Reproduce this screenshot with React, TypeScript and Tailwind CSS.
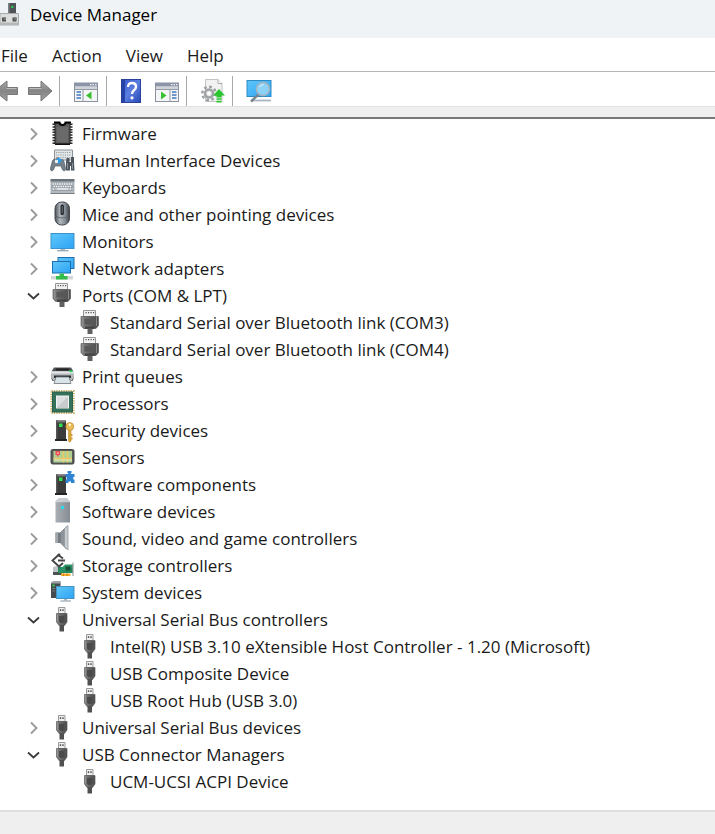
import { useState } from "react";
import type { ReactNode } from "react";

type DeviceNode = {
  label: string;
  icon: () => ReactNode;
  children?: string[];
  open?: boolean;
};

const Svg = ({ children }: { children: ReactNode }) => (
  <svg viewBox="0 0 24 24" className="size-6 shrink-0 overflow-visible" aria-hidden="true">
    {children}
  </svg>
);

// Shared gradients, referenced by id from the icons below
const Gradients = () => (
  <svg className="absolute size-0" aria-hidden="true">
    <defs>
      <linearGradient id="screen" x1="0" y1="0" x2="1" y2="1">
        <stop offset="0" stopColor="#5fc6f9" />
        <stop offset="1" stopColor="#2da3f5" />
      </linearGradient>
      <linearGradient id="metal" x1="0" y1="0" x2="1" y2="0">
        <stop offset="0" stopColor="#a9afb5" />
        <stop offset="1" stopColor="#858c93" />
      </linearGradient>
      <linearGradient id="plug" x1="0" y1="0" x2="1" y2="0">
        <stop offset="0" stopColor="#858585" />
        <stop offset="0.5" stopColor="#626262" />
        <stop offset="1" stopColor="#4c4c4c" />
      </linearGradient>
      <linearGradient id="arrow" x1="0" y1="0" x2="0" y2="1">
        <stop offset="0" stopColor="#a8a8a8" />
        <stop offset="0.5" stopColor="#858585" />
        <stop offset="1" stopColor="#a0a0a0" />
      </linearGradient>
      <linearGradient id="mouse" x1="0" y1="0" x2="1" y2="0">
        <stop offset="0" stopColor="#4b5157" />
        <stop offset="0.35" stopColor="#b1b8bf" />
        <stop offset="0.7" stopColor="#838b94" />
        <stop offset="1" stopColor="#3d4247" />
      </linearGradient>
      <linearGradient id="help" x1="0" y1="0" x2="1" y2="1">
        <stop offset="0" stopColor="#3355c8" />
        <stop offset="0.5" stopColor="#5b7fe0" />
        <stop offset="1" stopColor="#2546b4" />
      </linearGradient>
    </defs>
  </svg>
);

const FirmwareIcon = () => (
  <Svg>
    <path d="M4 1.500V23M21 1.500V23" stroke="#2b2b2b" strokeWidth="3" strokeDasharray="1.500 1.200" />
    <path d="M5 1h5q0 2 2.500 2T15 1h5v21H5z" fill="#5d5d5d" stroke="#222" />
    <path d="M4 .6h5.500q0 2.400 3 2.400t3-2.400H21" fill="none" stroke="#050505" strokeWidth="2" />
    <path d="M5 22.300h15" stroke="#111" strokeWidth="1.400" />
    <path d="M7 5h11v15H7z" fill="#6a6a6a" />
  </Svg>
);

const HidIcon = () => (
  <Svg>
    <path d="M4.500 1h18v10h-18z" fill="#e3e6e8" stroke="#8b9197" />
    <path d="M6 3.500h15M6 6h15M6 8.500h15" stroke="#9aa0a5" strokeWidth="1" strokeDasharray="1.200 1" />
    <path d="M2.500 11.500Q4 9.500 5.500 11h5q2-1.500 3.200.5l1.800 7.500q.3 3-1.500 3-1.500 0-3-5H5q-1.500 5-3 5-1.800 0-1.500-3z" fill="#74808a" stroke="#56616a" strokeWidth=".7" />
    <path d="M5 9.500l3-1.500v3z" fill="#e9802d" />
    <path d="M8 8l4 3-3 4-4-3z" fill="#2d9be8" />
    <path d="M5 11h3v3H5z" fill="#e7eef3" />
    <path d="M16.500 9h3v4h1.500V8h3v5l.5 8.500h-3.500V17h-1v4.500h-4V13z" fill="#4d565e" />
    <path d="M17.500 14v6M22.500 14v6" stroke="#89929a" />
  </Svg>
);

const KeyboardIcon = () => (
  <Svg>
    <path d="M.5 3h24v3H.5z" fill="#68727b" />
    <path d="M.5 5.500h24V18H.5z" fill="#b3bac0" />
    <path d="M1.500 6.500h22v8.500h-22z" fill="#97a0a7" />
    <path d="M2.500 8h20M3.500 10.500h18M2.500 13h3M19.500 13h3" stroke="#f4f6f7" strokeWidth="1.500" strokeDasharray="1.500 .8" />
    <path d="M6.500 13h12" stroke="#f4f6f7" strokeWidth="1.500" />
    <path d="M.5 17.500h24" stroke="#777f86" />
  </Svg>
);

const MouseIcon = () => (
  <Svg>
    <rect x="5" y="-1" width="14.500" height="23" rx="6.500" fill="url(#mouse)" stroke="#42484e" />
    <path d="M5.500 13q6.500 4 13.500 0" stroke="#555c63" fill="none" strokeWidth=".8" />
    <rect x="10.500" y="1.500" width="3.400" height="10.500" rx="1.500" fill="#23282d" />
    <path d="M12.200 3v7.500" stroke="#6f7a84" strokeWidth=".9" />
  </Svg>
);

const MonitorIcon = () => (
  <Svg>
    <rect x="1" y="3.500" width="23" height="15" fill="url(#screen)" stroke="#3a93cc" />
    <path d="M10.500 19h4.500v1.500h-4.500z" fill="#a8b9c4" />
    <path d="M7 20.700h11.500" stroke="#9cadb8" strokeWidth="1.400" />
  </Svg>
);

const NetworkIcon = () => (
  <Svg>
    <path d="M1 19h22v3.500H1z" fill="#d3d5d6" />
    <rect x="8" y=".5" width="16" height="11" fill="url(#screen)" stroke="#1b6fae" />
    <rect x="2.500" y="4.500" width="18" height="11.500" fill="url(#screen)" stroke="#1b6fae" />
    <path d="M9.500 16.500h4.500v2.500h3.500v3.500H6V19h3.500z" fill="#35bd4b" />
  </Svg>
);

const PortIcon = () => (
  <Svg>
    <path d="M5.500 -.5h12v6h-12z" fill="#f1f1f1" stroke="#959595" />
    <path d="M7.500 1.700h9" stroke="#555" strokeWidth="1.300" strokeDasharray="1.200 1.300" />
    <path d="M3 5.500h17.500V14.500L18 17.500H5.500L3 14.500z" fill="url(#plug)" stroke="#5c5c5c" strokeWidth=".7" />
    <path d="M6.500 8h10.500v5.500H6.500z" fill="#585858" />
    <path d="M4.800 6v9M18.500 6v9" stroke="#9c9c9c" strokeWidth=".8" />
    <path d="M7 15.500h9.500V18H7z" fill="#434343" />
    <path d="M9.500 17.500h5V23h-5z" fill="#606060" />
  </Svg>
);

const PrinterIcon = () => (
  <Svg>
    <path d="M4 2.500h17l2.500 4H1.500z" fill="#4d5154" />
    <path d="M6 3.500h13v2H6z" fill="#222" />
    <path d="M1 6.500h23v6.500l-1.500 3h-20L1 13z" fill="#b6babd" />
    <path d="M1 6.500h23v2H1z" fill="#e3e5e6" />
    <path d="M19.500 5.500h3v1.700h-3z" fill="#25e05a" />
    <path d="M4 10.500h17v2.500H4z" fill="#292c2e" />
    <path d="M6 12h13l2 6.500H4z" fill="#d9e3ea" stroke="#6c747a" strokeWidth=".8" />
    <path d="M1 12.500l3 3.500H2.500zM24 12.500L21 16h1.500z" fill="#555" />
  </Svg>
);

const ProcessorIcon = () => (
  <Svg>
    <rect x="1.500" y="-1" width="22" height="22" fill="none" stroke="#c6a759" strokeWidth="2.200" strokeDasharray="1.200 1.200" />
    <rect x="2.500" y="0" width="20" height="20" fill="#34705a" stroke="#2a6349" />
    <rect x="6.500" y="4" width="12" height="12" fill="#dddfe0" stroke="#f1f5f2" />
    <path d="M18 4.500v11.500H6.500z" fill="#c9cccd" />
  </Svg>
);

const Tower = () => (
  <>
    <path d="M6 1.500h10v18.500H6z" fill="#3b3b3b" />
    <path d="M6 1.500h10l-1 2H7z" fill="#777" />
    <path d="M6 1.500h1.500V20H6z" fill="#565656" />
    <path d="M5 20h12v2H5z" fill="#252525" />
    <path d="M9 4.500h3.500V8H9z" fill="#34e052" />
  </>
);

const SecurityIcon = () => (
  <Svg>
    <Tower />
    <path d="M18.500 10H21v12l-1.300 1.300L18.500 22z" fill="#dba83a" stroke="#b98527" strokeWidth=".6" />
    <path d="M21 15h1.500v2H21zM21 18.500h1.500v2H21z" fill="#d29c2e" />
    <circle cx="19.800" cy="7.500" r="3.900" fill="#e9bd58" stroke="#c39034" strokeWidth=".8" />
    <circle cx="19.800" cy="5.800" r="1.200" fill="#fff7dc" />
  </Svg>
);

const SensorIcon = () => (
  <Svg>
    <rect x="1" y="3.500" width="23" height="14.500" rx="1.500" fill="#5a5b58" stroke="#454745" />
    <path d="M3.500 5h18.500v11.500H3.500z" fill="#add193" />
    <path d="M3.500 12.500h18.500M13.500 5v11.500M17.500 5v11.500" stroke="#f0c763" strokeWidth="1.500" />
    <path d="M3.500 14h18.500" stroke="#e9efd5" strokeWidth=".8" />
    <path d="M5.500 5H10v4h-1.500v1.500H7V9H5.500z" fill="#ef4b52" />
    <path d="M7.200 6.500h1.300v1.300H7.200z" fill="#fff" />
  </Svg>
);

const SoftwareComponentIcon = () => (
  <Svg>
    <Tower />
    <path d="M15.500 1h2.700v-1h-.7v-2h4v2h-.7v1h3.700v3h-1.200v2.500h1.200V10h-3.500V8.500h-2.500V10h-3V6.500h1.200V4h-1.200z" fill="#2e83d2" />
  </Svg>
);

const SoftwareDeviceIcon = () => (
  <Svg>
    <path d="M5.500 1.500L8.500 -1.500H17l3 3v21H5.500z" fill="url(#metal)" />
    <path d="M5.500 1.500L8.500 -1.500H17l3 3z" fill="#c8cdd1" />
    <path d="M5.500 1.700H20" stroke="#e1e4e6" strokeWidth=".7" />
    <path d="M11 6h3v3h-3z" fill="#2bd9ed" />
  </Svg>
);

const SoundIcon = () => (
  <Svg>
    <path d="M5.500 5.500H11v10.500H5.500z" fill="#747b81" />
    <path d="M5.500 5.500h2.500v10.500H5.500z" fill="#a0a7ac" />
    <path d="M10.500 5.500L16.500 -.5v22.500l-6-6z" fill="#8d949a" stroke="#777e84" strokeWidth=".7" />
    <path d="M14.500 1.500L18 -1.500v24.500l-3.500-3z" fill="#c8cdd1" stroke="#939a9f" strokeWidth=".8" />
  </Svg>
);

const StorageIcon = () => (
  <Svg>
    <path d="M3 13l8-2v9.500H3z" fill="#bfc3c5" />
    <path d="M3 18h9v3H3z" fill="#4c5153" />
    <path d="M8 13h15v6H8z" fill="#23865d" />
    <path d="M8 17.500l7-7h8v3L11 19z" fill="#2d9468" />
    <path d="M15.500 12.500h5v4h-5z" fill="#194f3a" />
    <path d="M23 8.500V22" stroke="#9da1a3" strokeWidth="1.200" />
    <path d="M11 19.500h9.500V22H11z" fill="#f4ad2d" />
    <path d="M13.500 19.500V22M17 19.500V22" stroke="#cf7c18" />
    <path d="M9 .5L2.500 6.500 9 12.500l4-3.500M9 1.500l4 3M8 6.500h7" fill="none" stroke="#454545" strokeWidth="1.900" />
    <circle cx="9" cy="1" r="1.400" fill="#444" />
  </Svg>
);

const SystemIcon = () => (
  <Svg>
    <path d="M1 2l2-1.500h7.500V17H1z" fill="#454b4f" />
    <path d="M1 2l2-1.500h7.500v2H1z" fill="#9da2a5" />
    <path d="M2.500 7.500h2.500M2.500 10h2.500" stroke="#777d81" />
    <path d="M2.500 3.500h2v2h-2z" fill="#36dd53" />
    <rect x="6.500" y="5.500" width="17.500" height="12" fill="url(#screen)" stroke="#4593bf" />
    <path d="M14 18h3v1.500h-3z" fill="#a8b6bf" />
    <path d="M10.500 20h10.500" stroke="#9faeb7" strokeWidth="1.300" />
  </Svg>
);

const UsbIcon = () => (
  <Svg>
    <path d="M8.500 -.5h6.500v6H8.500z" fill="#eee" stroke="#9a9a9a" />
    <path d="M9.800 1.200h1.400v1.800H9.800zM12.300 1.200h1.400v1.800h-1.400z" fill="#555" />
    <path d="M6.500 5.500H17v8.500L14.500 17.500H9L6.500 14z" fill="url(#plug)" stroke="#5a5a5a" strokeWidth=".7" />
    <path d="M9 8h5.500v5.500L13 15h-2.500L9 13.500z" fill="#4a4a4a" />
    <path d="M7.500 6v7.500" stroke="#999" strokeWidth=".7" />
    <path d="M9.500 17H14v6.500H9.500z" fill="#505050" />
  </Svg>
);

const DeviceManagerIcon = () => (
  <svg viewBox="0 0 20 24" className="h-6 w-5 shrink-0" aria-hidden="true">
    <path d="M8 0h8v11H8z" fill="#505456" />
    <path d="M8 0h1.500v11H8z" fill="#7b8082" />
    <path d="M11.300 3h2v2h-2z" fill="#2bd84d" />
    <path d="M0 10.500h18.500V22H0z" fill="#dcdddd" stroke="#a9abac" />
    <path d="M0 19.500h18.500V22H0z" fill="#b5b7b8" />
    <path d="M2 14.500h4v4H2zM12.500 14.500h4v4h-4z" fill="#4d5051" />
    <path d="M3.500 14.500H6V17H3.500zM14 14.500h2.500V17H14z" fill="#777" />
  </svg>
);

const ArrowIcon = ({ back }: { back?: boolean }) => (
  <Svg>
    <path
      d={back ? "M23.500 8.500H13V2L.5 12 13 22v-6.500h10.500z" : "M.5 8.500H13V2l11 10-11 10v-6.500H.5z"}
      fill="url(#arrow)"
      stroke="#777"
    />
    <path d={back ? "M22.500 9.500H12.500" : "M1.500 9.500h12"} stroke="#bdbdbd" strokeWidth="1" />
  </Svg>
);

const PaneIcon = ({ right }: { right?: boolean }) => (
  <Svg>
    <rect x=".5" y="4" width="23" height="18.500" fill="#f4f5f6" stroke="#8b929d" />
    <path d="M.5 4h23v3.500H.5z" fill="#8b95a7" />
    <path d="M16 5.700h1.500M18.500 5.700H20M21 5.700h1.500" stroke="#f3f3f3" strokeWidth="1.200" />
    <path d="M1 9h22" stroke="#c4c8ce" strokeWidth="1.500" />
    <path d={right ? "M15 10.500v12M1 10.500h22" : "M9 10.500v12M1 10.500h22"} stroke="#949ba6" />
    <path
      d={right ? "M17 13h4.500M17 16h4.500M17 19h4.500" : "M2.500 13H7M2.500 16H7M2.500 19H7"}
      stroke="#3f78bc"
      strokeWidth="1.400"
    />
    <path d={right ? "M6 12.500l5.500 4L6 20.500z" : "M17.500 12.500l-5.500 4 5.500 4z"} fill="#38bf2d" />
  </Svg>
);

const HelpIcon = () => (
  <svg viewBox="2 0 20 24" className="h-6 w-5 shrink-0" aria-hidden="true">
    <rect x="2.500" y=".5" width="19" height="23" fill="url(#help)" stroke="#2a419b" />
    <path d="M3 1h3v22H3z" fill="#2543a6" />
    <path d="M9 8q0-4 4-4t4 3.800q0 2.200-2 3.500t-2 3.700" fill="none" stroke="#fff" strokeWidth="2.400" />
    <circle cx="13" cy="18.800" r="1.600" fill="#fff" />
  </svg>
);

const UpdateIcon = () => (
  <Svg>
    <path d="M4.500.5H17l4 4v18H4.500z" fill="#f2f2f2" stroke="#c3c3c3" />
    <path d="M17 .5v4h4" fill="#fff" stroke="#aaa" />
    <circle cx="8" cy="14.500" r="6.700" fill="none" stroke="#9a9ea1" strokeWidth="2.400" strokeDasharray="2.700 2.560" />
    <circle cx="8" cy="14.500" r="4" fill="#e5e6e7" stroke="#a0a4a7" strokeWidth="2.500" />
    <circle cx="8" cy="14.500" r="1.700" fill="#fff" />
    <path d="M18 10l6 6.500h-3.500v2h-5v-2H12z" fill="#29c62f" />
    <path d="M15.500 20h5M15.500 22.700h5" stroke="#29c62f" strokeWidth="1.700" />
  </Svg>
);

const ScanIcon = () => (
  <Svg>
    <path d="M4 21.500h20" stroke="#a7b6c0" strokeWidth="1.800" />
    <rect x="0" y="1.500" width="24" height="16" fill="url(#screen)" stroke="#318bc3" />
    <path d="M11.500 15.500l-7.500 7" stroke="#77858f" strokeWidth="2.400" />
    <circle cx="16" cy="10" r="6.500" fill="#a6dcf7" fillOpacity=".75" stroke="#a3b5c0" strokeWidth="1.500" />
    <path d="M12.500 8q1.500-2.500 4-2.500" fill="none" stroke="#e6f7ff" />
  </Svg>
);

const Chevron = ({ open }: { open: boolean }) => (
  <svg viewBox="0 0 14 14" className="size-3.5 overflow-visible" fill="none" aria-hidden="true">
    {open ? (
      <path d="M1 4.500l5.500 5 5.500-5" stroke="#3a3a3a" strokeWidth="1.800" />
    ) : (
      <path d="M4 1.500l5.500 5.500L4 12.500" stroke="#9b9b9b" strokeWidth="1.900" />
    )}
  </svg>
);

const devices: DeviceNode[] = [
  { label: "Firmware", icon: FirmwareIcon },
  { label: "Human Interface Devices", icon: HidIcon },
  { label: "Keyboards", icon: KeyboardIcon },
  { label: "Mice and other pointing devices", icon: MouseIcon },
  { label: "Monitors", icon: MonitorIcon },
  { label: "Network adapters", icon: NetworkIcon },
  {
    label: "Ports (COM & LPT)",
    icon: PortIcon,
    open: true,
    children: [
      "Standard Serial over Bluetooth link (COM3)",
      "Standard Serial over Bluetooth link (COM4)",
    ],
  },
  { label: "Print queues", icon: PrinterIcon },
  { label: "Processors", icon: ProcessorIcon },
  { label: "Security devices", icon: SecurityIcon },
  { label: "Sensors", icon: SensorIcon },
  { label: "Software components", icon: SoftwareComponentIcon },
  { label: "Software devices", icon: SoftwareDeviceIcon },
  { label: "Sound, video and game controllers", icon: SoundIcon },
  { label: "Storage controllers", icon: StorageIcon },
  { label: "System devices", icon: SystemIcon },
  {
    label: "Universal Serial Bus controllers",
    icon: UsbIcon,
    open: true,
    children: [
      "Intel(R) USB 3.10 eXtensible Host Controller - 1.20 (Microsoft)",
      "USB Composite Device",
      "USB Root Hub (USB 3.0)",
    ],
  },
  { label: "Universal Serial Bus devices", icon: UsbIcon },
  {
    label: "USB Connector Managers",
    icon: UsbIcon,
    open: true,
    children: ["UCM-UCSI ACPI Device"],
  },
];

const Separator = () => <div className="w-px self-stretch bg-[#a9a9a9]" />;

function TreeItem({ node }: { node: DeviceNode }) {
  const [open, setOpen] = useState(!!node.open);
  const Icon = node.icon;

  return (
    <li>
      <div className="flex h-[27px] items-center pl-[27px]">
        <button aria-label={`Toggle ${node.label}`} aria-expanded={open} onClick={() => setOpen(!open)}>
          <Chevron open={open} />
        </button>
        <div className="flex items-center gap-2 pl-[9px]">
          <Icon />
          <span className="whitespace-nowrap">{node.label}</span>
        </div>
      </div>

      {open && node.children && (
        <ul>
          {node.children.map((child) => (
            <li key={child} className="flex h-[27px] items-center gap-2 pl-[78px]">
              <Icon />
              <span className="whitespace-nowrap">{child}</span>
            </li>
          ))}
        </ul>
      )}
    </li>
  );
}

export default function App() {
  return (
    <div className="flex min-h-screen flex-col overflow-hidden bg-white font-['Open_Sans',sans-serif] text-[17px] leading-6 text-[#1a1a1a]">
      <Gradients />

      <header className="flex h-[38px] items-start gap-2.5 bg-[#eff3f6] pt-[3px] text-black">
        <DeviceManagerIcon />
        <h1>Device Manager</h1>
      </header>

      <nav className="flex h-[34px] items-center gap-6 border-b border-[#b5b5b5] pt-0.5 pl-px">
        <button>File</button>
        <button>Action</button>
        <button>View</button>
        <button>Help</button>
      </nav>

      <div className="flex h-[34px] items-center pt-1">
        <button aria-label="Back" className="-ml-1.5">
          <ArrowIcon back />
        </button>
        <button aria-label="Forward" className="mr-[7px] ml-2.5">
          <ArrowIcon />
        </button>
        <Separator />
        <button aria-label="Show console tree" className="mr-2 ml-3.5">
          <PaneIcon />
        </button>
        <Separator />
        <button aria-label="Help topics" className="ml-3.5">
          <HelpIcon />
        </button>
        <button aria-label="Show action pane" className="mr-[7px] ml-3.5">
          <PaneIcon right />
        </button>
        <Separator />
        <button aria-label="Update driver" className="mr-[7px] ml-3.5">
          <UpdateIcon />
        </button>
        <Separator />
        <button aria-label="Scan for hardware changes" className="ml-3.5">
          <ScanIcon />
        </button>
      </div>

      <div className="h-[13px] border-t border-b-2 border-t-[#e2e2e2] border-b-[#777777] bg-[#efefef]" />

      <main className="pt-px pb-[15px]">
        <ul>
          {devices.map((node) => (
            <TreeItem key={node.label} node={node} />
          ))}
        </ul>
      </main>

      <footer className="min-h-6 grow border-t-2 border-[#dedede] bg-[#efefef]" />
    </div>
  );
}
